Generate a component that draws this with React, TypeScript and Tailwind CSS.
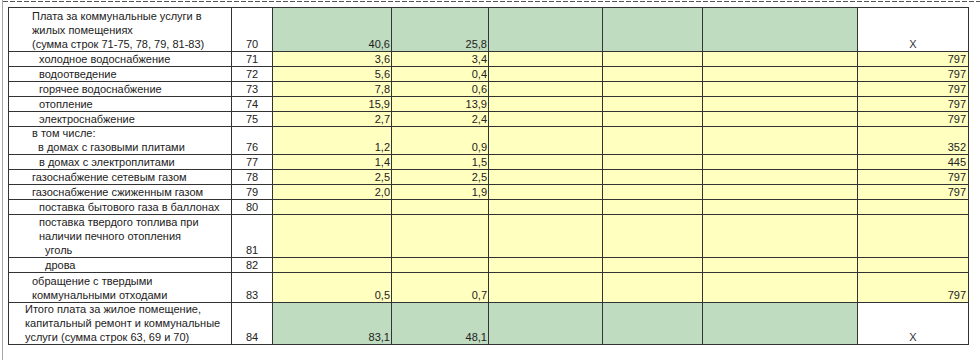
type Line = [string, number];

type Row = {
  lines: Line[];
  code: string;
  total?: boolean;
  a?: string;
  b?: string;
  last?: string;
  h: string;
};

const rows: Row[] = [
  {
    lines: [
      ["Плата за коммунальные услуги в", 23],
      ["жилых помещениях", 23],
      ["(сумма строк 71-75, 78, 79, 81-83)", 23],
    ],
    code: "70",
    total: true,
    a: "40,6",
    b: "25,8",
    last: "X",
    h: "h-[44px]",
  },
  { lines: [["холодное водоснабжение", 30]], code: "71", a: "3,6", b: "3,4", last: "797", h: "h-[15px]" },
  { lines: [["водоотведение", 30]], code: "72", a: "5,6", b: "0,4", last: "797", h: "h-[15px]" },
  { lines: [["горячее водоснабжение", 30]], code: "73", a: "7,8", b: "0,6", last: "797", h: "h-[15px]" },
  { lines: [["отопление", 30]], code: "74", a: "15,9", b: "13,9", last: "797", h: "h-[15px]" },
  { lines: [["электроснабжение", 30]], code: "75", a: "2,7", b: "2,4", last: "797", h: "h-[15px]" },
  {
    lines: [
      ["в том числе:", 23],
      ["в домах с газовыми плитами", 29],
    ],
    code: "76",
    a: "1,2",
    b: "0,9",
    last: "352",
    h: "h-[28px]",
  },
  { lines: [["в домах с электроплитами", 30]], code: "77", a: "1,4", b: "1,5", last: "445", h: "h-[15px]" },
  { lines: [["газоснабжение сетевым газом", 23]], code: "78", a: "2,5", b: "2,5", last: "797", h: "h-[15px]" },
  { lines: [["газоснабжение сжиженным газом", 23]], code: "79", a: "2,0", b: "1,9", last: "797", h: "h-[15px]" },
  { lines: [["поставка бытового газа в баллонах", 30]], code: "80", h: "h-[15px]" },
  {
    lines: [
      ["поставка твердого топлива при", 30],
      ["наличии печного отопления", 30],
      ["уголь", 36],
    ],
    code: "81",
    h: "h-[43px]",
  },
  { lines: [["дрова", 36]], code: "82", h: "h-[15px]" },
  {
    lines: [
      ["обращение с твердыми", 23],
      ["коммунальными отходами", 23],
    ],
    code: "83",
    a: "0,5",
    b: "0,7",
    last: "797",
    h: "h-[30px]",
  },
  {
    lines: [
      ["Итого плата за жилое помещение,", 16],
      ["капитальный ремонт и коммунальные", 16],
      ["услуги (сумма строк 63, 69 и 70)", 16],
    ],
    code: "84",
    total: true,
    a: "83,1",
    b: "48,1",
    last: "X",
    h: "h-[42px]",
  },
];

const cell = "border-r border-b border-[#333] flex flex-col justify-end";

export default function App() {
  return (
    <div className="h-[360px] w-[980px] bg-white pl-[2px] font-['Liberation_Sans',Arial,sans-serif] text-[11px] leading-[14px] text-[#222]">
      <div className="h-full border-l border-[#a6a6a6] pt-[1px]">
        {/* dashed page edge */}
        <div className="h-px bg-[repeating-linear-gradient(90deg,#555_0px,#555_5px,transparent_5px,transparent_7px)]" />

        <div className="ml-[5px] mt-[5px] grid w-[961px] grid-cols-[223px_41px_119px_97px_114px_100px_155px_111px] border-l border-t border-[#333]">
          {rows.map((r) => {
            const fill = r.total ? "bg-[#c0dcc0]" : "bg-[#ffffc0]";
            return (
              <div key={r.code} className={`contents`}>
                <div className={`${cell} ${r.h} bg-white`}>
                  {r.lines.map(([t, pl], i) => (
                    <div key={i} style={{ paddingLeft: pl }} className="whitespace-nowrap">
                      {t}
                    </div>
                  ))}
                </div>
                <div className={`${cell} ${r.h} bg-white items-center`}>{r.code}</div>
                <div className={`${cell} ${r.h} ${fill} items-end pr-[1px]`}>{r.a}</div>
                <div className={`${cell} ${r.h} ${fill} items-end pr-[1px]`}>{r.b}</div>
                <div className={`${cell} ${r.h} ${fill}`} />
                <div className={`${cell} ${r.h} ${fill}`} />
                <div className={`${cell} ${r.h} ${fill}`} />
                {r.total ? (
                  <div className={`${cell} ${r.h} bg-white items-center text-[#333]`}>{r.last}</div>
                ) : (
                  <div className={`${cell} ${r.h} bg-[#ffffc0] items-end pr-[2px]`}>{r.last}</div>
                )}
              </div>
            );
          })}
        </div>
      </div>
    </div>
  );
}
